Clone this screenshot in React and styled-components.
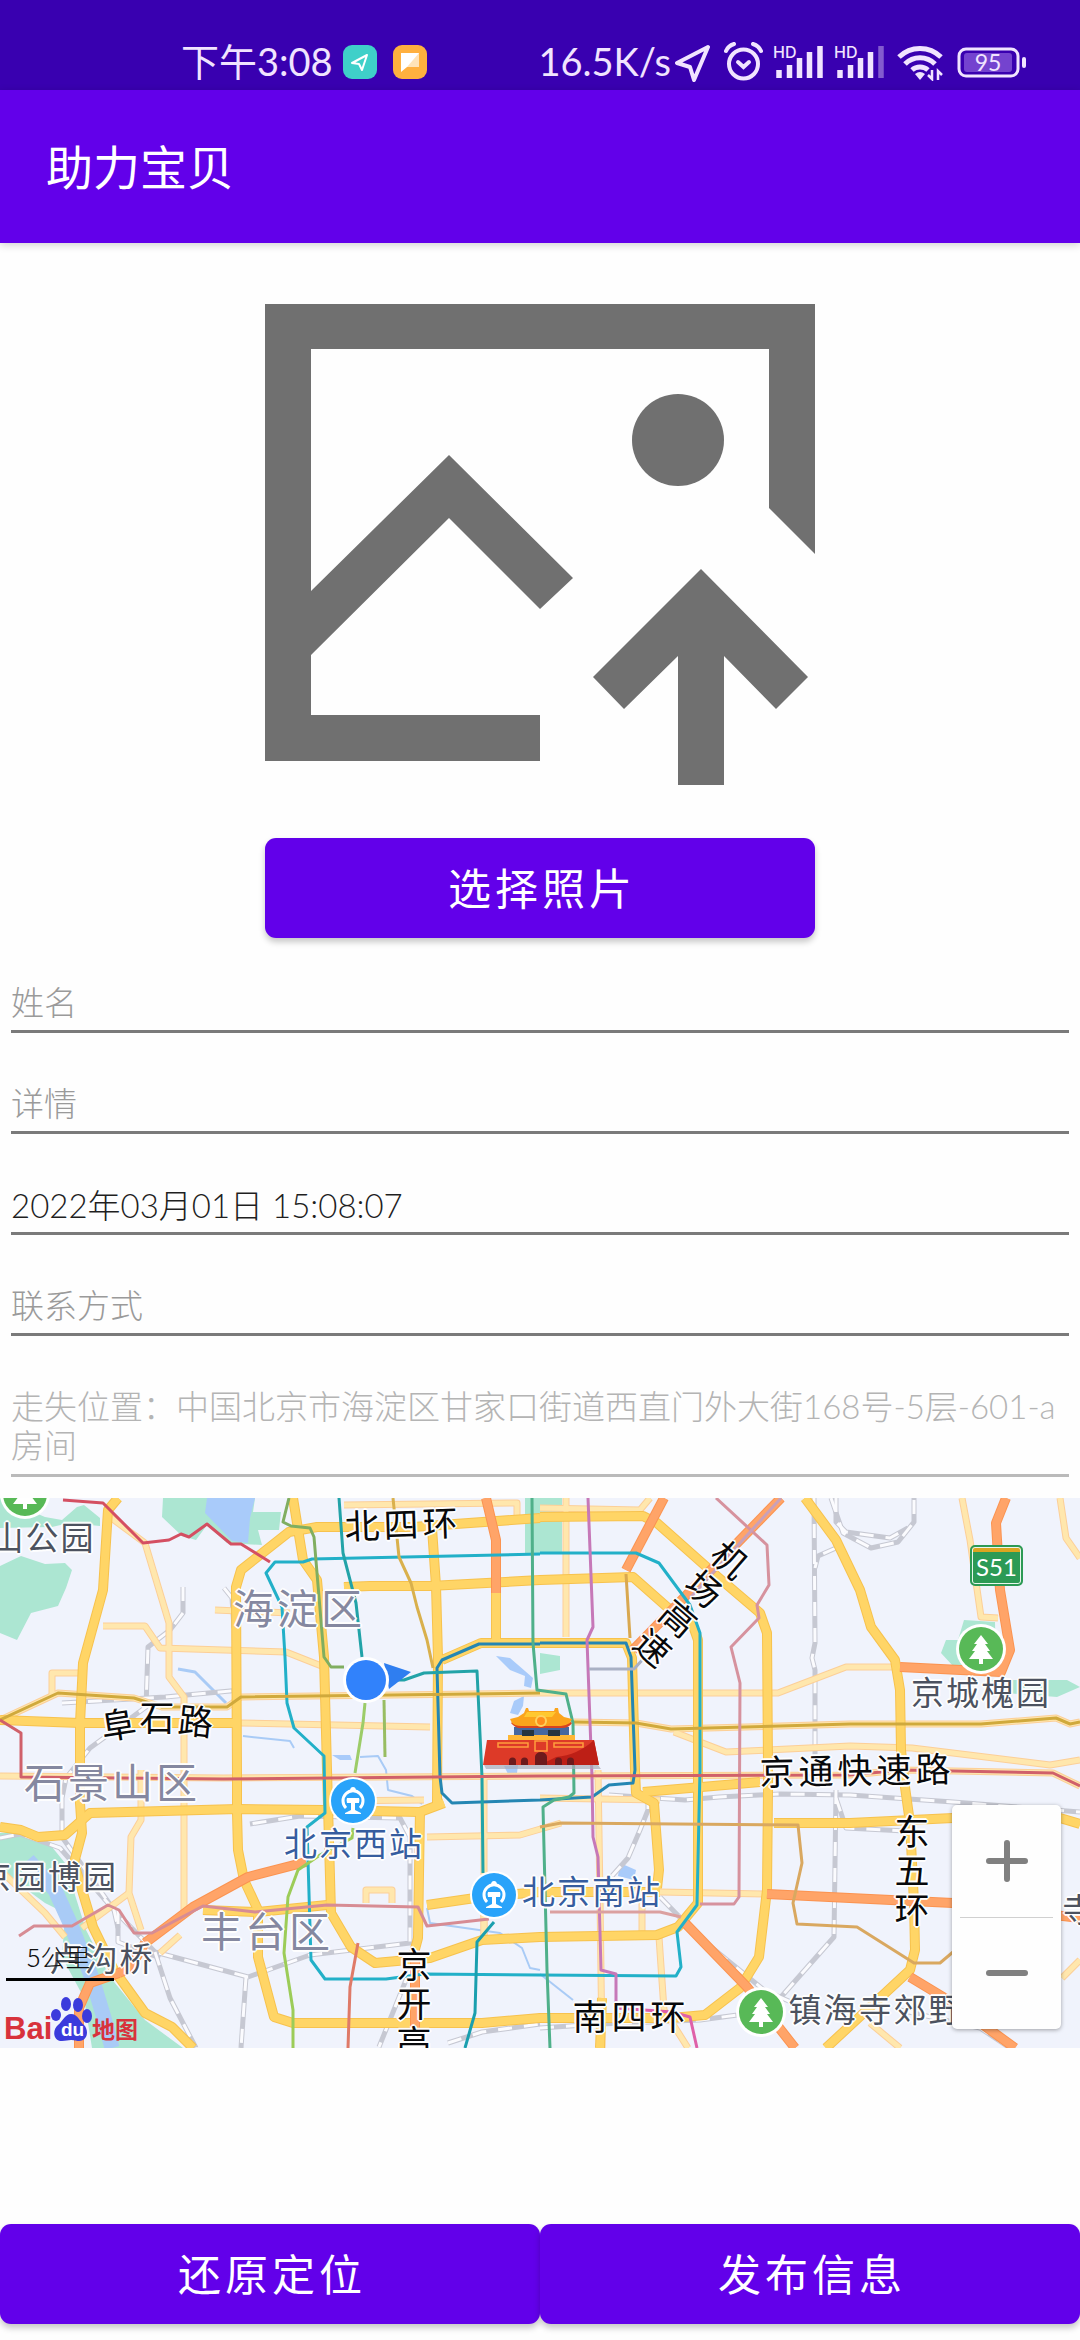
import React, { useState } from "react";
import styled, { createGlobalStyle } from "styled-components";

const purple = "#6200ea";
const statusInk = "#f1e4ff";
const lightStack = `Lato, "Noto Sans CJK SC", sans-serif`;

const GlobalStyle = createGlobalStyle`
  * { box-sizing: border-box; }
  body {
    margin: 0;
    background: #fefefe;
    font-family: "Noto Sans CJK SC", "Noto Sans", sans-serif;
  }
`;

const Screen = styled.div`
  min-height: 100vh;
  display: flex;
  flex-direction: column;
`;

/* ---------- status bar ---------- */

const StatusBar = styled.div`
  height: 90px;
  padding: 34px 53px 0 181px;
  display: flex;
  justify-content: space-between;
  align-items: center;
  background: #3900b0;
  color: ${statusInk};
`;

const StatusGroup = styled.div`
  display: flex;
  align-items: center;
  gap: ${(p) => p.$gap}px;
`;

const StatusText = styled.span`
  padding-bottom: 2px;
  font-family: ${lightStack};
  font-size: 38px;
  line-height: 40px;
  white-space: nowrap;
`;

const AppBadge = styled.span`
  width: 34px;
  height: 34px;
  margin-left: ${(p) => (p.$spaced ? 6 : 0)}px;
  border-radius: 9px;
  display: grid;
  place-items: center;
  background: ${(p) => p.$color};
`;

const SignalBox = styled.span`
  position: relative;
  display: flex;
`;

const SignalTag = styled.span`
  position: absolute;
  left: 0;
  top: 0;
  font: 500 16px/14px "Inter", sans-serif;
`;

const BatteryBox = styled.span`
  position: relative;
  display: flex;
`;

const BatteryLevel = styled.span`
  position: absolute;
  left: 0;
  top: 0;
  width: 62px;
  text-align: center;
  font: 400 23px/31px Lato, sans-serif;
`;

/* ---------- header ---------- */

const AppBar = styled.header`
  height: 153px;
  padding: 0 46px 4px;
  display: flex;
  align-items: center;
  background: ${purple};
  box-shadow: 0 2px 8px rgba(0, 0, 0, 0.18);
`;

const Title = styled.h1`
  margin: 0;
  color: #fff;
  font-size: 47px;
  font-weight: 400;
  line-height: 60px;
`;

/* ---------- form ---------- */

const Main = styled.main`
  flex: 1;
  display: flex;
  flex-direction: column;
`;

const PhotoPicker = styled.section`
  padding-top: 61px;
  display: flex;
  flex-direction: column;
  align-items: center;
  gap: 53px;
`;

const Button = styled.button`
  height: 100px;
  border: 0;
  border-radius: 11px;
  padding: 0 0 4px 4px;
  width: ${(p) => p.$width || "auto"};
  flex: ${(p) => (p.$grow ? 1 : "none")};
  background: ${purple};
  color: #fff;
  font-family: inherit;
  font-size: 43px;
  font-weight: 400;
  letter-spacing: 4px;
  box-shadow: 0 4px 6px rgba(0, 0, 0, 0.22);
`;

const Form = styled.form`
  margin: 39px 11px 21px;
  display: flex;
  flex-direction: column;
  gap: 45px;
`;

const Input = styled.input`
  width: 100%;
  height: 56px;
  padding: 0 0 4px;
  border: 0;
  border-bottom: 3px solid #7a7a7a;
  border-radius: 0;
  outline: 0;
  background: transparent;
  color: #1f1f1f;
  font-family: ${lightStack};
  font-size: 33px;
  font-weight: 300;
  &::placeholder { color: #9a9a9a; opacity: 1; }
`;

const Address = styled.textarea`
  display: block;
  width: 100%;
  height: 96px;
  padding: 6px 0 8px;
  border: 0;
  border-bottom: 3px solid #bababa;
  border-radius: 0;
  outline: 0;
  resize: none;
  overflow: hidden;
  background: transparent;
  color: #b4b4b4;
  font-family: ${lightStack};
  font-size: 33px;
  font-weight: 300;
  line-height: 39px;
`;

const Actions = styled.footer`
  display: flex;
  padding-bottom: 16px;
`;

/* ---------- map ---------- */

const MapFrame = styled.section`
  position: relative;
  height: 550px;
  overflow: hidden;
  background: #f0f3fc;
`;

const MapDrawing = styled.svg`
  display: block;
  width: 1080px;
  height: 550px;
`;

const halo = (c) =>
  `text-shadow: 2px 0 ${c}, -2px 0 ${c}, 0 2px ${c}, 0 -2px ${c}, 1px 1px ${c}, -1px -1px ${c}, 1px -1px ${c}, -1px 1px ${c};`;

const labelKinds = {
  road: "font-size: 35px; letter-spacing: 4px; color: #08090b;",
  district: "font-size: 41px; letter-spacing: 3px; color: #8588a0;",
  place: "font-size: 33px; letter-spacing: 2px; color: #4c525f;",
  station: "font-size: 33px; letter-spacing: 2px; color: #365d9f;",
};

const MapLabel = styled.span`
  position: absolute;
  left: ${(p) => p.$x}px;
  top: ${(p) => p.$y}px;
  margin-top: -3px;
  transform: translate(-50%, -50%) rotate(${(p) => p.$turn || 0}deg);
  writing-mode: ${(p) => (p.$vertical ? "vertical-rl" : "horizontal-tb")};
  line-height: 1;
  white-space: nowrap;
  ${(p) => labelKinds[p.$kind]}
  ${halo("rgba(255, 255, 255, 0.9)")}
`;

const CurvedChar = styled.span`
  display: inline-block;
  transform: translateY(${(p) => p.$drop}px) rotate(${(p) => p.$turn}deg);
`;

const Shield = styled.span`
  position: absolute;
  left: 970px;
  top: 47px;
  width: 53px;
  height: 41px;
  border-radius: 5px;
  border: 2px solid #2c9a55;
  background: linear-gradient(#dba520 0 5px, #2c9a55 5px);
  box-shadow: inset 0 0 0 1px #e8f6ec;
  color: #fff;
  text-align: center;
  font: 400 24px/39px Lato, sans-serif;
`;

const ScaleBar = styled.div`
  position: absolute;
  left: 6px;
  top: 444px;
  width: 108px;
  height: 39px;
  padding-left: 21px;
  color: #111;
  font-size: 25px;
  font-weight: 300;
  line-height: 28px;
  border-bottom: 3px solid #000;
`;

const MapBrand = styled.div`
  position: absolute;
  left: 4px;
  top: 498px;
  height: 46px;
  display: flex;
  align-items: flex-end;
  color: #d8323c;
`;

const BrandLatin = styled.span`
  width: 47px;
  font: 700 31px/27px "Liberation Sans", sans-serif;
`;

const BrandPaw = styled.span`
  position: relative;
  display: flex;
  width: 41px;
`;

const BrandDu = styled.span`
  position: absolute;
  left: 10px;
  bottom: 3px;
  color: #fff;
  font: 700 19px/18px "Liberation Sans", sans-serif;
`;

const BrandHan = styled.span`
  font-size: 23px;
  font-weight: 700;
  line-height: 28px;
`;

const ZoomControls = styled.div`
  position: absolute;
  right: 19px;
  bottom: 19px;
  width: 109px;
  height: 224px;
  padding: 0 8px;
  display: flex;
  flex-direction: column;
  background: #fefefe;
  border-radius: 5px;
  box-shadow: 0 1px 4px rgba(0, 0, 0, 0.35);
`;

const ZoomButton = styled.button`
  flex: 1;
  display: grid;
  place-items: center;
  padding: 0;
  border: 0;
  background: transparent;
  & + & { border-top: 1px solid #d0d0d0; }
`;

const parks = [
  "0,0 45,19 62,22 77,9 84,7 100,20 100,28 69,25 52,29 0,30",
  "0,68 21,58 45,66 65,65 72,72 66,90 58,108 31,115 17,142 0,135",
  "163,0 162,19 182,38 196,42 207,27 227,45 262,47 258,32 279,32 281,14 253,14 255,0",
  "525,0 562,0 562,55 525,55",
  "0,335 20,334 52,349 65,365 86,432 110,479 145,522 183,550 92,550 84,500 62,459 65,415 45,405 0,372",
  "964,122 995,124 996,170 953,168 941,155 946,142 958,142",
  "991,182 1067,182 1080,189 1057,199 1005,195",
  "540,155 560,158 560,172 540,176",
];

const lakes = [
  "207,0 255,0 250,20 248,45 232,43 205,15",
  "620,365 636,372 634,382 618,378",
  "496,158 510,160 525,173 533,180 531,190 524,188 525,178 510,172",
  "514,203 524,198 523,208 518,217 510,215",
  "504,268 518,267 517,275 508,276",
  "332,257 350,257 352,262 340,262",
];

const rivers = [
  { d: "28,362 55,392 70,425 92,480 104,520 112,550", w: 15 },
  { d: "178,171 195,174 226,205", w: 3 },
  { d: "243,238 290,243 294,250", w: 2 },
  { d: "360,259 378,258 386,272 388,292 412,298 422,306", w: 2 },
  { d: "540,476 573,502", w: 2 },
  { d: "427,410 430,425 500,435 522,450 530,470 540,472", w: 2 },
];

const rails = [
  "814,0 815,145 812,160 815,172 815,259",
  "836,50 818,58 815,70",
  "831,0 843,35 871,50 898,44 914,24 914,0",
  "836,0 836,24 846,34 890,40 908,30",
  "836,292 834,439 781,499",
  "609,297 685,302 719,299 780,296 850,297 953,304 1080,314",
  "660,399 700,440 764,492 800,508",
  "836,300 846,330 905,333",
  "648,297 648,312 640,332 628,360 612,378",
  "62,205 165,199 241,192",
  "183,89 183,115 170,132 148,149 146,209 90,250 66,280 62,300 62,339 114,412 118,430",
  "0,340 20,336 60,350 114,412 155,454 248,479 310,457 410,445 410,339 400,320 300,318 250,326",
  "155,454 170,500 196,550",
  "118,412 118,444 160,460",
  "246,479 241,550",
  "410,472 379,549",
  "448,545 482,534 540,526",
  "540,530 600,526 700,522 745,516",
  "900,512 980,530 1010,550",
  "224,90 232,100 234,130",
];

const minorRoads = [
  "110,19 145,45 169,125 169,179 184,199 184,415",
  "103,128 145,128 160,150 286,154 324,169",
  "52,199 52,175 79,175",
  "241,225 430,229",
  "0,222 58,195 134,200 162,209 227,209 241,199 540,195 778,195 846,169 898,169",
  "574,224 636,225 671,231 850,226 981,226 1056,220 1070,226 1080,224",
  "674,234 726,254 850,248 912,250 1050,267 1080,262",
  "427,339 520,337 561,325",
  "0,278 223,280 540,278 850,277 902,272 1053,275 1080,288",
  "962,0 970,42 981,119 998,120",
  "1060,0 1066,40 1080,60",
  "566,0 566,139",
  "598,272 600,400 602,550",
  "659,439 664,512 688,550",
  "141,272 141,322 131,339 129,395 141,432",
  "129,395 82,430",
  "0,372 45,415 65,439",
  "344,7 517,5 517,20",
  "660,394 767,396",
  "642,400 642,435",
  "324,303 424,302",
  "366,405 366,392 392,392 392,405",
  "540,300 660,302",
  "484,399 484,440",
  "215,112 290,115",
  "484,279 484,440",
  "1062,480 1080,462",
  "160,455 180,437",
  "870,525 900,550",
  "540,10 640,12 650,0",
];

const majorRoads = [
  "118,0 108,12 103,92 83,165 80,225 80,305 82,335 74,365 93,429 114,472 145,515 172,529 193,550",
  "540,20 413,29 317,29 289,34 241,72 236,89 237,279 237,315 238,352 244,382 258,412 258,459 274,519 293,525 482,525 540,520 671,520 705,517 740,490 759,459 767,392 768,292 768,269 767,135 760,115 719,80 657,25 643,18 540,19",
  "344,89 370,88 430,88 540,82 633,79 667,109 692,125 698,142 698,279 698,405 678,429 657,437 540,439 482,442 430,460 375,465 351,449 331,415 327,272 324,159 317,82 303,62 293,0",
  "0,222 80,225 237,225",
  "0,329 21,332 38,339 65,337 90,315 238,311 324,312 420,314 444,305",
  "432,30 436,88 438,160 437,305",
  "420,312 418,440 414,455",
  "442,162 481,145 626,145 632,160 635,272 636,295 654,305 659,372 657,390",
  "427,407 482,399 540,394 660,394",
  "805,0 836,42 860,92 871,129 895,162 900,192 901,252 905,289 910,325 914,405 915,452 910,472 826,550",
  "774,325 850,325 953,320 1060,320 1080,326",
  "643,294 760,284",
  "496,90 496,142",
  "602,500 600,550",
  "203,412 258,414 327,407",
];

const highways = [
  "145,445 193,409 248,379 306,364",
  "486,0 496,42 496,95",
  "664,0 626,72",
  "781,0 633,152",
  "1006,0 996,25 1000,92 1010,152 1001,174 900,169",
  "767,396 953,405 1080,420",
  "685,425 747,489 795,550",
  "910,479 953,505 1015,550",
  "119,475 90,485 79,510 79,550",
  "415,452 415,550",
  "145,445 130,470 119,475",
];

const metro = [
  { c: "#22b0c8", d: "540,56 312,61 303,64 275,64 266,75 282,109 285,159 287,205 294,230 324,258 325,315 307,329 311,462 325,481 386,481 424,476 540,477 676,478 681,469 677,434 697,407 700,272 700,135 690,107 659,65 636,55 540,55" },
  { c: "#2486b3", d: "540,146 479,146 442,162 437,170 440,279 442,295 452,305 540,302 592,299 609,287 633,285 635,272 631,159 626,145 540,145" },
  { c: "#22a3a8", d: "339,0 343,55 356,105 362,159" },
  { c: "#22a3a8", d: "396,182 404,182 424,175 477,173 482,279 483,375" },
  { c: "#1a9fae", d: "494,424 477,444 475,515 465,550" },
  { c: "#80ae60", d: "289,0 283,24 291,28 310,30 314,39 324,159 331,169 344,169" },
  { c: "#98bd62", d: "384,202 385,259" },
  { c: "#9ccc68", d: "365,205 363,225 355,275" },
  { c: "#9ccc58", d: "353,330 352,340 320,357 298,372 288,399 284,455 293,512 293,550" },
  { c: "#d9b04c", d: "393,0 399,59 411,85 417,109 427,142 433,170" },
  { c: "#d0a93c", d: "0,222 58,195 134,200 162,209 227,209 241,199 540,195" },
  { c: "#d0a93c", d: "574,224 636,225 671,231 850,226 981,226 1056,220 1070,226 1080,224" },
  { c: "#c678b8", d: "588,0 593,129 587,142 592,279 593,339 598,359 601,472 616,476 616,510" },
  { c: "#df60a8", d: "616,510 672,514 690,519 697,550" },
  { c: "#d6929e", d: "716,0 767,47 769,87 757,107 759,120 731,149 740,185 739,399 734,406 700,406" },
  { c: "#d44f62", d: "63,2 103,5 143,45 169,42 181,36 189,39 207,26 231,46 241,46 270,64" },
  { c: "#4fb08a", d: "532,0 533,145 537,192 566,196 573,225 574,295 569,299 554,302 543,309 547,472 550,550" },
  { c: "#d78c94", d: "19,438 34,428 72,428 108,407 119,412 134,435 152,435 203,408 255,414 327,407 418,409 427,428 489,421" },
  { c: "#dba0a0", d: "550,414 660,414 681,419" },
  { c: "#df7a68", d: "358,445 350,489 348,550" },
  { c: "#d0606a", d: "0,222 21,235 21,279 223,281 540,278 850,277 902,272 1053,275 1080,288" },
  { c: "#d9a860", d: "540,329 561,325 798,327 802,365 793,405 797,426 857,429 914,465 940,465 953,454" },
  { c: "#c9a0b8", d: "781,0 690,100" },
  { c: "#a9b0c4", d: "589,171 634,171 644,160" },
  { c: "#d9a850", d: "626,76 630,140" },
];

const labels = [
  { t: "山公园", k: "place", x: 43, y: 41 },
  { t: "海淀区", k: "district", x: 299, y: 111 },
  { t: "石景山区", k: "district", x: 112, y: 285 },
  { t: "丰台区", k: "district", x: 267, y: 434 },
  { t: "京园博园", k: "place", x: 48, y: 380 },
  { t: "卢沟桥", k: "place", x: 102, y: 462 },
  { t: "京城槐园", k: "place", x: 981, y: 196 },
  { t: "镇海寺郊野", k: "place", x: 876, y: 513 },
  { t: "寺", k: "place", x: 1080, y: 413 },
  { t: "北京西站", k: "station", x: 354, y: 347 },
  { t: "北京南站", k: "station", x: 592, y: 395 },
  { t: "北四环", k: "road", x: 403, y: 27, turn: -2 },
  { t: "南四环", k: "road", x: 631, y: 519 },
  { t: "京通快速路", k: "road", x: 857, y: 273, turn: -1 },
  { t: "东五环", k: "road", x: 912, y: 378, v: true },
  { t: "京开高", k: "road", x: 414, y: 511, v: true },
  { t: "机场高速", k: "road", x: 690, y: 110, v: true, turn: 41 },
];

function Lines({ items, color, width, ...rest }) {
  return (
    <g fill="none" stroke={color} strokeWidth={width} strokeLinejoin="round" {...rest}>
      {items.map((d) => <polyline key={d} points={d} />)}
    </g>
  );
}

function TreePin({ x, y }) {
  return (
    <g transform={`translate(${x} ${y})`}>
      <circle r="25" fill="#fff" />
      <circle r="22" fill="#58b957" />
      <path fill="#fff" d="M0-14 7-5H4l5 7H6l6 8H2v5h-4v-5h-10l6-8h-3l5-7h-3Z" />
    </g>
  );
}

function StationPin({ x, y }) {
  return (
    <g transform={`translate(${x} ${y})`}>
      <circle r="24" fill="#fff" />
      <circle r="22" fill="#29a3fa" />
      <path d="M-7 7A10 10 0 1 1 7 7" fill="none" stroke="#fff" strokeWidth="3" />
      <path d="M-3-10q0-4 3-4t3 4Z" fill="#fff" />
      <path d="M-6-3H6q1 2 0 5H2v7l6 3v1H-8v-1l6-3V2h-4q-1-3 0-5Z" fill="#fff" />
    </g>
  );
}

function Gate() {
  return (
    <g>
      <path d="M484 267h114l3 4H486Z" fill="#a9abb8" opacity=".7" />
      <path d="M487 242h107l5 25H483Z" fill="#dd3a28" />
      <path d="M594 242 599 267H540l16-8q22-2 38-17Z" fill="#bd1f16" />
      <path d="M498 245h30v4h-30ZM554 245h29v4h-29ZM535 243h12v10h-12Z" fill="none" stroke="#ff9f3c" strokeWidth="1.500" />
      <path d="M509 267v-4a3 3 0 0 1 7 0v4ZM521 267v-4a3 3 0 0 1 7 0v4ZM555 267v-4a3 3 0 0 1 7 0v4ZM567 267v-4a3 3 0 0 1 7 0v4ZM535 267v-8a6 5 0 0 1 12 0v8Z" fill="#6d1a1c" />
      <path d="M508 237h67v5h-67Z" fill="#ffb734" />
      <path d="M514 229h55v8h-55Z" fill="#46689f" />
      <path d="M522 232h12v6h-12ZM548 232h12v6h-12Z" fill="#26353f" />
      <path d="M511 225q5 6 10 5h41q7 0 10-5l-6-4h-49Z" fill="#d8431f" />
      <path d="M526 210h2l1 3h25l1-3h3l1 5 5 4 8 2-2 4q-5 3-9 3h-40q-6 0-9-3l-2-4 8-2 6-4Z" fill="#fba41c" />
      <path d="M527 214h29l-4 5h-28Z" fill="#ffc830" />
      <circle cx="541" cy="223" r="5" fill="#ff8e1d" stroke="#ffd25c" strokeWidth="2" />
    </g>
  );
}

function CityMap() {
  return (
    <MapFrame aria-label="地图">
      <MapDrawing viewBox="0 0 1080 550" aria-hidden="true">
        <g fill="#ace6d2">{parks.map((p) => <polygon key={p} points={p} />)}</g>
        <g fill="#a9cbfa">{lakes.map((p) => <polygon key={p} points={p} />)}</g>
        <g fill="none" stroke="#a9cbf6" strokeLinejoin="round">
          {rivers.map((r) => <polyline key={r.d} points={r.d} strokeWidth={r.w} />)}
        </g>
        <Lines items={rails} color="#c6c8d2" width="5" />
        <Lines items={rails} color="#fbfbfe" width="3" strokeDasharray="14 12" />
        <Lines items={minorRoads} color="#fccf98" width="7" />
        <Lines items={minorRoads} color="#ffe7ad" width="5" />
        <Lines items={majorRoads} color="#f7c24e" width="10" />
        <Lines items={majorRoads} color="#ffd566" width="8" />
        <Lines items={highways} color="#fb9350" width="10" />
        <Lines items={highways} color="#ffa468" width="8" />
        <g fill="none" strokeWidth="3" strokeLinejoin="round">
          {metro.map((m) => <polyline key={m.d} points={m.d} stroke={m.c} />)}
        </g>
        <Gate />
        <TreePin x={25} y={-4} />
        <TreePin x={981} y={151} />
        <TreePin x={761} y={514} />
        <StationPin x={353} y={303} />
        <StationPin x={494} y={397} />
        <path d="M384 165 411 174 389 191Z" fill="#2f7ef0" />
        <circle cx="366" cy="182" r="23" fill="#fff" />
        <circle cx="366" cy="182" r="20" fill="#3182fb" />
      </MapDrawing>
      {labels.map((l) => (
        <MapLabel key={l.t} $kind={l.k} $x={l.x} $y={l.y} $turn={l.turn} $vertical={l.v}>{l.t}</MapLabel>
      ))}
      <MapLabel $kind="road" $x={159} $y={223}>
        <CurvedChar $drop={4} $turn={-9}>阜</CurvedChar>
        <CurvedChar $drop={-3} $turn={0}>石</CurvedChar>
        <CurvedChar $drop={1} $turn={6}>路</CurvedChar>
      </MapLabel>
      <Shield>S51</Shield>
      <ScaleBar>5公里</ScaleBar>
      <MapBrand>
        <BrandLatin>Bai</BrandLatin>
        <BrandPaw>
          <svg width="41" height="46" viewBox="0 0 41 46" fill="#3b3bdc" aria-hidden="true">
            <ellipse cx="5" cy="19" rx="5" ry="6" />
            <ellipse cx="15" cy="8" rx="5" ry="7" />
            <ellipse cx="27" cy="9" rx="5" ry="7" />
            <ellipse cx="36" cy="20" rx="5" ry="7" />
            <path d="M20 18c7 0 8 7 13 11 5 5 4 16-5 16-4 0-5-1-8-1s-5 1-9 1c-9 0-10-11-4-16 5-4 7-11 13-11Z" />
          </svg>
          <BrandDu>du</BrandDu>
        </BrandPaw>
        <BrandHan>地图</BrandHan>
      </MapBrand>
      <ZoomControls>
        <ZoomButton type="button" aria-label="放大">
          <svg width="42" height="42" viewBox="0 0 42 42" stroke="#808080" strokeWidth="6" strokeLinecap="round" aria-hidden="true">
            <path d="M21 3v36M3 21h36" />
          </svg>
        </ZoomButton>
        <ZoomButton type="button" aria-label="缩小">
          <svg width="42" height="42" viewBox="0 0 42 42" stroke="#808080" strokeWidth="6" strokeLinecap="round" aria-hidden="true">
            <path d="M3 21h36" />
          </svg>
        </ZoomButton>
      </ZoomControls>
    </MapFrame>
  );
}

/* ---------- status icons ---------- */

function Signal({ weak }) {
  return (
    <SignalBox>
      <svg width="51" height="34" viewBox="0 0 51 34" stroke={statusInk} strokeWidth="5.500" aria-hidden="true">
        <path d="M6 33v-8M16.500 33V20M26.500 33V13M36.500 33V7" />
        <path d="M47 33V1" opacity={weak ? 0.4 : 1} />
      </svg>
      <SignalTag>HD</SignalTag>
    </SignalBox>
  );
}

function Status() {
  return (
    <StatusBar>
      <StatusGroup $gap={10}>
        <StatusText>下午3:08</StatusText>
        <AppBadge $color="#3fd0c9">
          <svg width="20" height="20" viewBox="0 0 20 20" fill="none" stroke="#fff" strokeWidth="2" strokeLinejoin="round" aria-hidden="true">
            <path d="M17 3 2 11l7 1 3 6Z" />
          </svg>
        </AppBadge>
        <AppBadge $color="#ffb03f" $spaced>
          <svg width="20" height="20" viewBox="0 0 20 20" aria-hidden="true">
            <path d="M1 1h18v14H7l-6 5Z" fill="#fff" />
            <path d="M19 1v14H7Z" fill="#ffe3b8" />
          </svg>
        </AppBadge>
      </StatusGroup>
      <StatusGroup $gap={10}>
        <StatusGroup $gap={3}>
          <StatusText>16.5K/s</StatusText>
          <svg width="40" height="40" viewBox="0 0 40 40" fill="none" stroke={statusInk} strokeWidth="4" strokeLinejoin="round" aria-hidden="true">
            <path d="M34 5 3 21l13 4 4 13Z" />
          </svg>
        </StatusGroup>
        <svg width="39" height="40" viewBox="0 0 39 40" fill="none" stroke={statusInk} strokeWidth="4" strokeLinecap="round" aria-hidden="true">
          <circle cx="19.500" cy="22" r="14.500" />
          <path d="m14 20 5.500 5 5.500-5" />
          <path d="M2 9q2-5 8-7M37 9q-2-5-8-7" />
        </svg>
        <Signal />
        <Signal weak />
        <svg width="52" height="38" viewBox="0 0 52 38" fill="none" stroke={statusInk} strokeWidth="5" aria-hidden="true">
          <path d="M4 14a30 30 0 0 1 42 0" />
          <path d="M10 21a21 21 0 0 1 30 0" />
          <path d="M17 27a12 12 0 0 1 16 0" />
          <path d="m20 31 5 6 5-6q-5-4-10 0Z" fill={statusInk} stroke="none" />
          <path d="M37 27v9l-4-4M43 37v-9l4 4" strokeWidth="2.500" />
        </svg>
        <BatteryBox>
          <svg width="70" height="31" viewBox="0 0 70 31" aria-hidden="true">
            <rect x="7" y="6" width="48" height="19" rx="3" fill="#7443cf" />
            <rect x="2" y="2" width="59" height="27" rx="7" fill="none" stroke={statusInk} strokeWidth="3" />
            <rect x="65" y="10" width="4" height="11" rx="2" fill={statusInk} />
          </svg>
          <BatteryLevel>95</BatteryLevel>
        </BatteryBox>
      </StatusGroup>
    </StatusBar>
  );
}

function PhotoPlaceholder() {
  return (
    <svg width="550" height="481" viewBox="0 0 550 481" fill="#707070" role="img" aria-label="照片">
      <path d="M0 0H550V250L504 204V45H46V287L184 151 308 274 275 305 184 214 46 351V411H275V457H0Z" />
      <circle cx="413" cy="136" r="46" />
      <path d="M436 265 543 373 511 405 459 352V481H413V352L359 405 328 373Z" />
    </svg>
  );
}

export default function App() {
  const [time, setTime] = useState("2022年03月01日 15:08:07");
  return (
    <>
      <GlobalStyle />
      <Screen>
        <Status />
        <AppBar><Title>助力宝贝</Title></AppBar>
        <Main>
          <PhotoPicker>
            <PhotoPlaceholder />
            <Button type="button" $width="550px">选择照片</Button>
          </PhotoPicker>
          <Form>
            <Input type="text" aria-label="姓名" placeholder="姓名" />
            <Input type="text" aria-label="详情" placeholder="详情" />
            <Input type="text" aria-label="时间" value={time} onChange={(e) => setTime(e.target.value)} />
            <Input type="text" aria-label="联系方式" placeholder="联系方式" />
            <Address
              aria-label="走失位置"
              readOnly
              value="走失位置：中国北京市海淀区甘家口街道西直门外大街168号-5层-601-a房间"
            />
          </Form>
          <CityMap />
        </Main>
        <Actions>
          <Button type="button" $grow>还原定位</Button>
          <Button type="button" $grow>发布信息</Button>
        </Actions>
      </Screen>
    </>
  );
}
